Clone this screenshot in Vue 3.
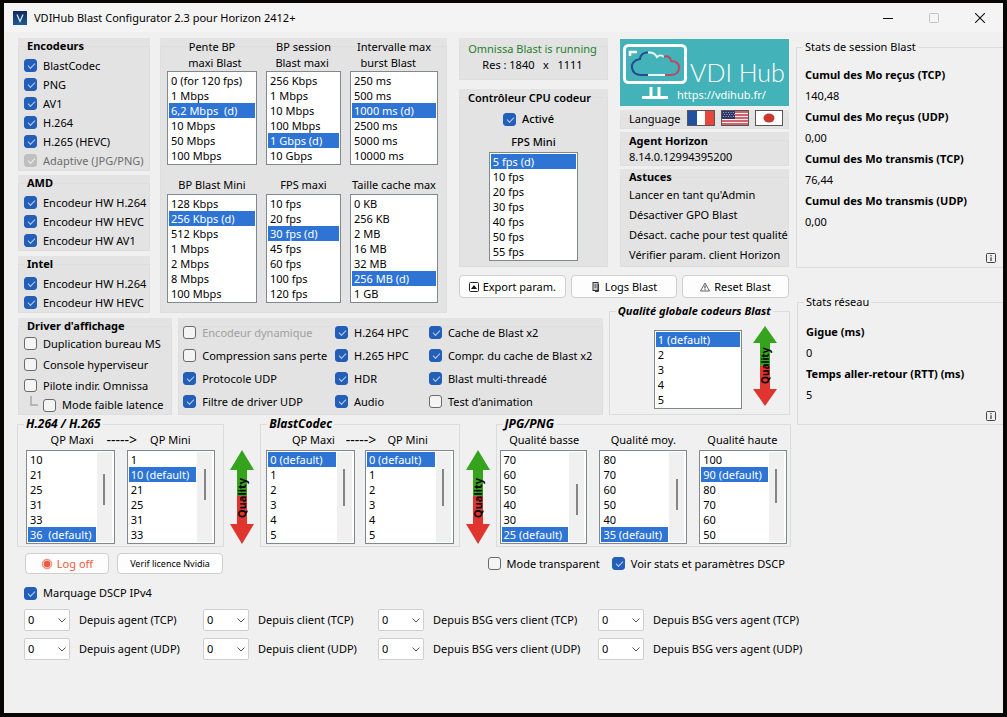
<script setup>
const encoderGroups = [
  {
    title: 'Encodeurs',
    items: [
      { label: 'BlastCodec', on: true },
      { label: 'PNG', on: true },
      { label: 'AV1', on: true },
      { label: 'H.264', on: true },
      { label: 'H.265 (HEVC)', on: true },
      { label: 'Adaptive (JPG/PNG)', on: true, disabled: true },
    ],
  },
  {
    title: 'AMD',
    items: [
      { label: 'Encodeur HW H.264', on: true },
      { label: 'Encodeur HW HEVC', on: true },
      { label: 'Encodeur HW AV1', on: true },
    ],
  },
  {
    title: 'Intel',
    items: [
      { label: 'Encodeur HW H.264', on: true },
      { label: 'Encodeur HW HEVC', on: true },
    ],
  },
]

const blastLists = [
  { id: 'slope', title: 'Pente BP\n  maxi Blast', sel: 2, items: ['0 (for 120 fps)', '1 Mbps', '6,2 Mbps\u00a0 (d)', '10 Mbps', '50 Mbps', '100 Mbps'] },
  { id: 'session', title: 'BP session\nBlast maxi ', sel: 4, items: ['256 Kbps', '1 Mbps', '10 Mbps', '100 Mbps', '1 Gbps (d)', '10 Gbps'] },
  { id: 'burst', title: 'Intervalle max\nburst Blast    ', sel: 2, items: ['250 ms', '500 ms', '1000 ms (d)', '2500 ms', '5000 ms', '10000 ms'] },
  { id: 'bpmin', title: 'BP Blast Mini', sel: 1, items: ['128 Kbps', '256 Kbps (d)', '512 Kbps', '1 Mbps', '2 Mbps', '8 Mbps', '100 Mbps'] },
  { id: 'fpsmax', title: 'FPS maxi', sel: 2, items: ['10 fps', '20 fps', '30 fps (d)', '45 fps', '60 fps', '100 fps', '120 fps'] },
  { id: 'cache', title: 'Taille cache max', sel: 5, items: ['0 KB', '256 KB', '2 MB', '16 MB', '32 MB', '256 MB (d)', '1 GB'] },
]

const resolution = 'Res : 1840   x   1111'
const fpsMin = ['5 fps (d)', '10 fps', '20 fps', '30 fps', '40 fps', '50 fps', '55 fps']
const tips = ["Lancer en tant qu'Admin", 'Désactiver GPO Blast', 'Désact. cache pour test qualité', 'Vérifier param. client Horizon']

const drivers = [
  { label: 'Duplication bureau MS' },
  { label: 'Console hyperviseur' },
  { label: 'Pilote indir. Omnissa' },
  { label: 'Mode faible latence', child: true },
]

const options = [
  { label: 'Encodeur dynamique', faded: true },
  { label: 'H.264 HPC', on: true },
  { label: 'Cache de Blast x2', on: true },
  { label: 'Compression sans perte' },
  { label: 'H.265 HPC', on: true },
  { label: 'Compr. du cache de Blast x2', on: true },
  { label: 'Protocole UDP', on: true },
  { label: 'HDR', on: true },
  { label: 'Blast multi-threadé', on: true },
  { label: 'Filtre de driver UDP', on: true },
  { label: 'Audio', on: true },
  { label: "Test d'animation" },
]

const codecs = [
  {
    title: 'H.264 / H.265',
    kind: 'h26x',
    lists: [
      { title: 'QP Maxi', sel: 5, top: 22, size: 31, items: ['10', '21', '25', '31', '33', '36\u00a0 (default)'] },
      { title: 'QP Mini', sel: 1, top: 17, size: 31, items: ['1', '10 (default)', '21', '25', '31', '33'] },
    ],
  },
  {
    title: 'BlastCodec',
    kind: 'blast',
    lists: [
      { title: 'QP Maxi', sel: 0, top: 17, size: 37, items: ['0 (default)', '1', '2', '3', '4', '5'] },
      { title: 'QP Mini', sel: 0, top: 17, size: 37, items: ['0 (default)', '1', '2', '3', '4', '5'] },
    ],
  },
  {
    title: 'JPG/PNG',
    kind: 'jpg',
    lists: [
      { title: 'Qualité basse', sel: 5, top: 32, size: 31, items: ['70', '60', '50', '40', '30', '25 (default)'] },
      { title: 'Qualité moy.', sel: 5, top: 27, size: 31, items: ['80', '70', '60', '50', '40', '35 (default)'] },
      { title: 'Qualité haute', sel: 1, top: 17, size: 34, items: ['100', '90 (default)', '80', '70', '60', '50'] },
    ],
  },
]

const stats = [
  {
    title: 'Stats de session Blast',
    kind: 'session',
    rows: [
      ['Cumul des Mo reçus (TCP)', '140,48'],
      ['Cumul des Mo reçus (UDP)', '0,00'],
      ['Cumul des Mo transmis (TCP)', '76,44'],
      ['Cumul des Mo transmis (UDP)', '0,00'],
    ],
  },
  {
    title: 'Stats réseau',
    kind: 'network',
    rows: [
      ['Gigue (ms)', '0'],
      ['Temps aller-retour (RTT) (ms)', '5'],
    ],
  },
]

const dscp = [
  'Depuis agent (TCP)', 'Depuis client (TCP)', 'Depuis BSG vers client (TCP)', 'Depuis BSG vers agent (TCP)',
  'Depuis agent (UDP)', 'Depuis client (UDP)', 'Depuis BSG vers client (UDP)', 'Depuis BSG vers agent (UDP)',
]
</script>

<template>
  <div class="window">
    <header class="titlebar">
      <svg class="app-icon" viewBox="0 0 14 14" aria-hidden="true">
        <defs>
          <linearGradient id="appGrad" x1="0" y1="0" x2="0" y2="1">
            <stop offset="0" stop-color="#12275c" />
            <stop offset="1" stop-color="#1f5c94" />
          </linearGradient>
        </defs>
        <rect width="14" height="14" fill="url(#appGrad)" />
        <path d="M4 3.5L7 10.5L10 3.5" fill="none" stroke="#d5e6f5" stroke-width="1.2" />
      </svg>
      <h1>VDIHub Blast Configurator 2.3 pour Horizon 2412+</h1>
      <div class="win-buttons">
        <button type="button" aria-label="Réduire">
          <svg viewBox="0 0 10 10"><path d="M0 5.5H10" stroke="#111" /></svg>
        </button>
        <button type="button" aria-label="Agrandir" disabled>
          <svg viewBox="0 0 10 10"><rect x=".5" y=".5" width="9" height="9" rx="1" fill="none" stroke="#c3c3c3" /></svg>
        </button>
        <button type="button" aria-label="Fermer">
          <svg viewBox="0 0 10 10"><path d="M0 0L10 10M10 0L0 10" stroke="#111" stroke-width="1.1" /></svg>
        </button>
      </div>
    </header>

    <div class="body">
      <main class="main">
        <div class="top">
          <div class="top-left">
            <div class="encoders">
              <section v-for="g in encoderGroups" :key="g.title" class="panel encoder">
                <h2>{{ g.title }}</h2>
                <label v-for="i in g.items" :key="i.label" class="check" :class="{ disabled: i.disabled }">
                  <input type="checkbox" :checked="i.on" :disabled="i.disabled" /><span>{{ i.label }}</span>
                </label>
              </section>
            </div>

            <section class="panel lists">
              <div v-for="l in blastLists" :key="l.id" class="list-cell">
                <label class="list-title" :for="l.id">{{ l.title }}</label>
                <div class="listbox">
                  <select :id="l.id" :size="l.items.length">
                    <option v-for="(o, n) in l.items" :key="n" :selected="n === l.sel">{{ o }}</option>
                  </select>
                </div>
              </div>
            </section>
          </div>

          <div class="top-right">
            <div class="stack cpu-col">
              <section class="panel status">
                <p class="running">Omnissa Blast is running</p>
                <p class="res">{{ resolution }}</p>
              </section>
              <section class="panel cpu">
                <h2>Contrôleur CPU codeur</h2>
                <label class="check"><input type="checkbox" checked /><span>Activé</span></label>
                <label class="list-title" for="fpsmin">FPS Mini</label>
                <div class="listbox">
                  <select id="fpsmin" :size="fpsMin.length">
                    <option v-for="(o, n) in fpsMin" :key="n" :selected="n === 0">{{ o }}</option>
                  </select>
                </div>
              </section>
            </div>

            <div class="stack info-col">
              <div class="banner">
                <svg viewBox="0 0 64 67" aria-hidden="true">
                  <rect x="4.500" y="6.500" width="61" height="37" rx="4" fill="none" stroke="#fff" stroke-width="3" />
                  <path d="M10 17V13H17" fill="none" stroke="#fff" stroke-width="2.500" />
                  <path d="M28 13.500C24 13 20 16 20 20C14 21 11 25 12 29C13 34 17 36 21 36H28" fill="none" stroke="#244a91" stroke-width="2" />
                  <path d="M28 36H45M28 13.500C33 13 36 16 37 18C39 16 42 16 44 18" fill="none" stroke="#eaf6f7" stroke-width="2" />
                  <path d="M44 18C48 16 51 19 51 22C57 22 60 26 59 30C58 34 55 36 51 36H45" fill="none" stroke="#b94a62" stroke-width="2" />
                  <path d="M31 48V58M39 48V58M22 58.500H48" fill="none" stroke="#fff" stroke-width="3" />
                </svg>
                <div class="banner-text">
                  <strong>VDI Hub</strong>
                  <a href="https://vdihub.fr/">https://vdihub.fr/</a>
                </div>
              </div>
              <section class="panel language">
                <span>Language</span>
                <button type="button" aria-label="Français">
                  <svg viewBox="0 0 26 14"><path fill="#2351a1" d="M0 0h9v14H0z" /><path fill="#fff" d="M9 0h8v14H9z" /><path fill="#e8453c" d="M17 0h9v14h-9z" /></svg>
                </button>
                <button type="button" aria-label="English">
                  <svg viewBox="0 0 26 14">
                    <path fill="#f4eeee" d="M0 0h26v14H0z" />
                    <path d="M0 1h26M0 4h26M0 7h26M0 10h26M0 13h26" stroke="#c5333f" stroke-width="1.400" />
                    <path fill="#2f3768" d="M0 0h13v8H0z" />
                    <path d="M1 1.500h12M2 3.500h11M1 5.500h12" stroke="#b8bdd6" stroke-dasharray="1 1.500" stroke-width=".8" />
                  </svg>
                </button>
                <button type="button" aria-label="日本語">
                  <svg viewBox="0 0 26 14"><path fill="#fff" d="M0 0h26v14H0z" /><ellipse cx="13" cy="7" rx="5.500" ry="4.500" fill="#c9382f" /></svg>
                </button>
              </section>
              <section class="panel agent">
                <h2>Agent Horizon</h2>
                <p>8.14.0.12994395200</p>
              </section>
              <section class="panel tips">
                <h2>Astuces</h2>
                <p v-for="t in tips" :key="t">{{ t }}</p>
              </section>
            </div>

            <div class="actions">
              <button type="button" class="btn">
                <svg viewBox="0 0 10 10"><rect x=".5" y=".5" width="9" height="9" rx="1" fill="none" stroke="#222" /><path d="M5 3L8 7H2z" fill="#111" /></svg>
                Export param.
              </button>
              <button type="button" class="btn">
                <svg viewBox="0 0 10 10"><rect x="2" y=".5" width="5" height="8" fill="#ccc" stroke="#333" /><path d="M3.500 3h2M3.500 5h2M7.500 2v7.500H4" stroke="#333" fill="none" /></svg>
                Logs Blast
              </button>
              <button type="button" class="btn">
                <svg viewBox="0 0 10 10"><path d="M5 1L9.500 9H.5z" fill="#fff" stroke="#555" stroke-width=".9" /><path d="M5 3.500V6.500M5 7.300V8.200" stroke="#222" /></svg>
                Reset Blast
              </button>
            </div>
          </div>
        </div>

        <div class="middle">
          <section class="panel driver">
            <h2>Driver d'affichage</h2>
            <div v-for="d in drivers" :key="d.label" class="driver-row" :class="{ child: d.child }">
              <svg v-if="d.child" viewBox="0 0 8 10" aria-hidden="true"><path d="M1 0V9H8" fill="none" stroke="#a8a8a8" stroke-width="1.500" /></svg>
              <label class="check"><input type="checkbox" /><span>{{ d.label }}</span></label>
            </div>
          </section>

          <section class="panel options">
            <label v-for="o in options" :key="o.label" class="check" :class="{ faded: o.faded }">
              <input type="checkbox" :checked="o.on" /><span>{{ o.label }}</span>
            </label>
          </section>

          <fieldset class="group global">
            <legend>Qualité globale codeurs Blast</legend>
            <div class="global-body">
              <div class="listbox">
                <select aria-label="Qualité globale codeurs Blast" size="5">
                  <option selected>1 (default)</option>
                  <option v-for="n in [2, 3, 4, 5]" :key="n">{{ n }}</option>
                </select>
              </div>
              <svg class="arrow" viewBox="0 0 24 80">
                <path d="M12 0L24 17H17V40H7V17H0z" fill="#36a31c" />
                <path d="M12 80L24 63H17V40H7V63H0z" fill="#e0352f" />
                <text transform="translate(16 58) rotate(-90)" class="quality small">Quality</text>
              </svg>
            </div>
          </fieldset>
        </div>

        <div class="codecs">
          <template v-for="(c, ci) in codecs" :key="c.title">
            <svg v-if="ci" class="arrow tall" viewBox="0 0 24 94">
              <path d="M12 0L24 20H17V46H7V20H0z" fill="#36a31c" />
              <path d="M12 94L24 74H17V46H7V74H0z" fill="#e0352f" />
              <text transform="translate(16 68) rotate(-90)" class="quality">Quality</text>
            </svg>
            <fieldset class="group codec" :class="c.kind">
              <legend>{{ c.title }}</legend>
              <div class="codec-head">
                <template v-for="(l, li) in c.lists" :key="l.title">
                  <span v-if="li && c.kind !== 'jpg'" class="dash">-----&gt;</span>
                  <label :for="c.kind + li">{{ l.title }}</label>
                </template>
              </div>
              <div class="codec-lists">
                <div v-for="(l, li) in c.lists" :key="l.title" class="listbox scrolling">
                  <select :id="c.kind + li" :size="l.items.length">
                    <option v-for="(o, n) in l.items" :key="n" :selected="n === l.sel">{{ o }}</option>
                  </select>
                  <div class="track"><span class="thumb" :style="{ marginTop: l.top + 'px', height: l.size + 'px' }"></span></div>
                </div>
              </div>
            </fieldset>
          </template>
        </div>

        <div class="bottom-row">
          <div class="bottom-buttons">
            <button type="button" class="btn logoff">
              <svg viewBox="0 0 12 12"><circle cx="6" cy="6" r="5.500" fill="#fbd5cc" /><circle cx="6" cy="6" r="4.500" fill="none" stroke="#ef6248" stroke-width="1" stroke-dasharray="1.500 .6" /><circle cx="6" cy="6" r="3.200" fill="#ef5a3e" /></svg>
              Log off
            </button>
            <button type="button" class="btn nvidia">Verif licence Nvidia</button>
          </div>
          <label class="check"><input type="checkbox" /><span>Mode transparent</span></label>
          <label class="check"><input type="checkbox" checked /><span>Voir stats et paramètres DSCP</span></label>
        </div>
      </main>

      <aside class="stats">
        <fieldset v-for="s in stats" :key="s.title" class="group stat" :class="s.kind">
          <legend>{{ s.title }}</legend>
          <dl>
            <template v-for="r in s.rows" :key="r[0]">
              <dt>{{ r[0] }}</dt>
              <dd>{{ r[1] }}</dd>
            </template>
          </dl>
          <svg class="info" viewBox="0 0 10 10"><rect x=".5" y=".5" width="9" height="9" rx="1" fill="none" stroke="#444" /><path d="M5 2V3.200M5 4.200V8" stroke="#333" stroke-width="1.200" /></svg>
        </fieldset>
      </aside>
    </div>

    <section class="dscp">
      <label class="check"><input type="checkbox" checked /><span>Marquage DSCP IPv4</span></label>
      <div class="dscp-grid">
        <div v-for="(d, n) in dscp" :key="d" class="dscp-item">
          <div class="combo">
            <select :id="'dscp' + n"><option>0</option></select>
            <svg viewBox="0 0 8 5" aria-hidden="true"><path d="M.5 .5L4 4L7.500 .5" fill="none" stroke="#555" /></svg>
          </div>
          <label :for="'dscp' + n">{{ d }}</label>
        </div>
      </div>
    </section>
  </div>
</template>

<style>
html {
  background: #080604;
}
</style>

<style scoped>
.window,
.window * {
  box-sizing: border-box;
}
.window {
  min-height: 100vh;
  border: solid #080604;
  border-width: 3px 4px 4px;
  background: #f0f0f0;
  color: #000;
  font: 11px/16px "Noto Sans", "Noto Sans CJK JP", sans-serif;
  white-space: nowrap;
}
h1,
h2,
p,
dl,
dt,
dd,
fieldset {
  margin: 0;
  padding: 0;
  font-size: 11px;
}
button,
select,
input {
  margin: 0;
  font: inherit;
  color: inherit;
}
.titlebar {
  display: flex;
  align-items: center;
  height: 29px;
  padding-left: 9px;
  background: #f4f4f4;
}
.app-icon {
  width: 14px;
  height: 14px;
}
h1 {
  flex: 1;
  margin-left: 7px;
  font-weight: 400;
}
.win-buttons {
  display: flex;
}
.win-buttons button {
  display: flex;
  align-items: center;
  justify-content: center;
  width: 46px;
  height: 29px;
  border: 0;
  padding: 0;
  background: none;
}
.win-buttons svg {
  width: 10px;
  height: 10px;
}
.body {
  display: grid;
  grid-template-columns: 774fr 207fr;
  gap: 5px;
  padding: 6px 0 0 13px;
}
.main,
.stats {
  min-width: 0;
}

.panel {
  position: relative;
  min-width: 0;
  background: #e3e3e3;
}
.panel::before {
  content: "";
  position: absolute;
  inset: 8px 0 0;
  border: 1px solid #dedede;
  pointer-events: none;
}
.panel > * {
  position: relative;
}
h2 {
  font-weight: 700;
}

.top {
  display: grid;
  grid-template-columns: 429fr 330fr;
  gap: 12px;
  padding: 0 2px 0 1px;
}
.top-left {
  display: grid;
  grid-template-columns: 132fr 287fr;
  gap: 10px;
}
.encoders {
  display: flex;
  flex-direction: column;
  gap: 4px;
}
.encoder {
  padding: 0 0 1px 6px;
  overflow: hidden;
}
.encoder:last-child {
  margin-top: 1px;
}
.encoder h2 {
  height: 18px;
  padding: 0 0 0 3px;
}
.encoder .check {
  height: 19px;
}

.check {
  display: flex;
  align-items: center;
  gap: 6px;
}
.check input {
  appearance: none;
  flex: none;
  position: relative;
  width: 13px;
  height: 13px;
  border: 1px solid #6a6a6a;
  border-radius: 3px;
  background: #f4f4f4;
}
.check input:checked {
  border-color: #235fb9;
  background: #235fb9;
}
.check input:checked::after {
  content: "";
  position: absolute;
  left: 3px;
  top: 3px;
  width: 6px;
  height: 3px;
  border: solid #b9d0f2;
  border-width: 0 0 1px 1px;
  transform: rotate(-45deg);
}
.check input:disabled {
  border-color: #bfbfbf;
  background: #bfbfbf;
}
.check input:disabled::after {
  border-color: #f0f0f0;
}
.disabled {
  color: #6d6d6d;
}
.faded {
  color: #a0a0a0;
}

.lists {
  display: grid;
  grid-template-columns: 90fr 75fr 88fr;
  column-gap: 9px;
  align-content: start;
  padding: 1px 9px 10px 7px;
}
.list-title {
  display: flex;
  justify-content: center;
  align-items: end;
  white-space: pre;
  text-align: center;
}
.list-cell .list-title {
  height: 32px;
}
.list-cell:nth-child(n + 4) .list-title {
  height: 29px;
  padding-bottom: 1px;
}
.listbox {
  display: flex;
  border: 1px solid #828790;
  padding: 1px;
  background: #fff;
}
.listbox select {
  flex: 1;
  min-width: 0;
  display: block;
  overflow: hidden;
  scrollbar-width: none;
  border: 0;
  border-radius: 0;
  padding: 0;
  outline: 0;
  background: none;
}
.listbox option {
  height: 15px;
  min-height: 15px;
  padding: 0 2px;
  line-height: 15px;
}
.listbox option:checked {
  background: linear-gradient(#2d74d5, #2d74d5);
  color: #fff;
  -webkit-text-fill-color: #fff;
}
.scrolling select {
  margin-right: 1px;
}
.track {
  width: 15px;
  margin-right: 1px;
  background: #f0f0f0;
}
.thumb {
  display: block;
  width: 2px;
  margin: 0 auto;
  background: #858585;
}

.top-right {
  display: grid;
  grid-template-columns: 149fr 169fr;
  column-gap: 12px;
  row-gap: 8px;
  align-content: start;
}
.stack {
  display: flex;
  flex-direction: column;
  min-width: 0;
}
.cpu-col {
  gap: 9px;
}
.status {
  padding: 3px 2px 7px 0;
  text-align: center;
  white-space: pre;
}
.running {
  color: #23812c;
}
.cpu {
  display: flex;
  flex-direction: column;
  align-items: center;
  font-weight: 500;
  flex: 1;
  padding-top: 1px;
}
.cpu h2 {
  padding-right: 8px;
  font-weight: 600;
}
.cpu .check {
  height: 26px;
  padding-right: 10px;
}
.cpu .list-title {
  height: 20px;
  padding-bottom: 2px;
}
.cpu .listbox {
  width: 60%;
}
.info-col {
  gap: 3px;
}
.banner {
  display: flex;
  height: 67px;
  margin: 1px 0;
  background: #43b3b9;
  color: #fff;
}
.banner svg {
  width: 64px;
  height: 67px;
  overflow: visible;
}
.banner-text {
  flex: 1;
  display: flex;
  flex-direction: column;
  padding-top: 19px;
}
.banner strong {
  padding-left: 6px;
  font: 300 25px/28px Lato, sans-serif;
}
.banner a {
  margin-left: -7px;
  padding-top: 1px;
  color: #fff;
  text-decoration: none;
}
.language {
  display: flex;
  align-items: start;
  gap: 6px;
  height: 19px;
  padding-left: 9px;
}
.language span {
  width: 52px;
  line-height: 18px;
}
.language button {
  width: 28px;
  height: 16px;
  border: 1px solid #555;
  padding: 0;
  background: #fff;
}
.language svg {
  display: block;
  width: 26px;
  height: 14px;
}
.agent {
  height: 34px;
  padding: 1px 0 0 9px;
}
.tips {
  flex: 1;
  padding: 0 0 2px 9px;
  overflow: hidden;
}
.tips p {
  line-height: 20px;
}
.actions {
  grid-column: 1 / -1;
  display: grid;
  grid-template-columns: 1fr 1fr 1fr;
  gap: 5px;
}
.btn {
  display: flex;
  align-items: center;
  justify-content: center;
  gap: 4px;
  height: 23px;
  border: 1px solid #cfcfcf;
  border-radius: 4px;
  padding: 0;
  background: #fdfdfd;
}
.btn svg {
  width: 10px;
  height: 10px;
}

.middle {
  display: grid;
  grid-template-columns: 154fr 424fr 181fr;
  gap: 6px;
  align-items: end;
  padding: 5px 1px 0;
}
.driver {
  height: 97px;
  padding-left: 6px;
}
.driver h2 {
  height: 15px;
  padding-left: 3px;
}
.driver-row {
  display: flex;
  height: 21px;
}
.driver-row.child {
  height: 18px;
  padding-left: 6px;
  gap: 5px;
}
.driver-row svg {
  width: 8px;
  height: 10px;
}
.options {
  display: grid;
  grid-template-columns: 152fr 94fr 174fr;
  grid-auto-rows: 23px;
  height: 97px;
  padding: 3px 0 0 5px;
}
.group {
  min-width: 0;
  border: 1px solid #dcdcdc;
}
.group legend {
  padding: 0 2px;
}
.global legend,
.codec legend {
  margin-left: 6px;
  font-weight: 700;
  font-style: italic;
}
.codec legend {
  font-size: 12px;
}
.global {
  margin-top: -16px;
}
.global-body {
  display: grid;
  grid-template-columns: 88fr 24px;
  column-gap: 11px;
  align-items: start;
  padding: 7px 12px 5px 44px;
}
.global .listbox {
  margin-top: 4px;
}
.arrow {
  display: block;
  width: 24px;
  height: 80px;
}
.arrow.tall {
  height: 94px;
  align-self: end;
  margin-bottom: 3px;
}
.quality {
  font: 700 11px "Noto Sans", sans-serif;
}
.quality.small {
  font-size: 10px;
}
.codecs {
  display: grid;
  grid-template-columns: 207fr 24px 199fr 24px 295fr;
  column-gap: 6px;
  padding-top: 1px;
}
.codec-head {
  display: flex;
  justify-content: center;
  gap: 13px;
  height: 18px;
}
.blast .codec-head {
  gap: 11px;
}
.jpg .codec-head {
  gap: 10px;
  padding: 0 3px;
}
.jpg .codec-head label {
  flex: 1;
  text-align: center;
}
.dash {
  font-size: 14px;
}
.codec-lists {
  display: grid;
  grid-auto-flow: column;
  grid-auto-columns: 1fr;
  gap: 12px;
  padding: 0 8px 2px;
}
.blast .codec-lists {
  gap: 10px;
  padding: 0 5px 2px;
}
.jpg .codec-lists {
  padding: 0 3px 2px;
}
.bottom-row {
  display: grid;
  grid-template-columns: 462fr 124fr 179fr;
  align-items: center;
  padding: 6px 0 0 8px;
}
.bottom-buttons {
  display: flex;
  gap: 8px;
}
.bottom-buttons .btn {
  height: 21px;
}
.logoff {
  width: 84px;
  color: #ef5a3e;
}
.logoff svg {
  width: 12px;
  height: 12px;
}
.nvidia {
  width: 106px;
  font-size: 9px;
}

.stats {
  display: flex;
  flex-direction: column;
  gap: 26px;
  padding-top: 1px;
}
.stat {
  border-right: 0;
  padding: 9px 7px 4px 8px;
}
.stat dl {
  padding-bottom: 21px;
}
.stat.network {
  margin-left: 1px;
  padding: 11px 7px 3px 8px;
}
.stat.network dl {
  padding-bottom: 6px;
}
.stat legend {
  margin-left: -2px;
}
.stat dt,
.stat dd {
  line-height: 21px;
}
.stat dt {
  font-weight: 700;
}
.info {
  display: block;
  width: 10px;
  height: 10px;
  margin-left: auto;
}

.dscp {
  padding: 11px 0 0 20px;
}
.dscp-grid {
  display: grid;
  grid-template-columns: 179fr 175fr 220fr 405fr;
  row-gap: 7px;
  padding-top: 8px;
}
.dscp-item {
  display: flex;
  align-items: center;
  gap: 9px;
}
.combo {
  position: relative;
}
.combo select {
  appearance: none;
  display: block;
  width: 46px;
  height: 22px;
  border: 1px solid #cfcfcf;
  border-radius: 2px;
  padding: 0 14px 0 3px;
  background: #fff;
}
.combo svg {
  position: absolute;
  right: 4px;
  top: 9px;
  width: 8px;
  height: 5px;
  pointer-events: none;
}
</style>
